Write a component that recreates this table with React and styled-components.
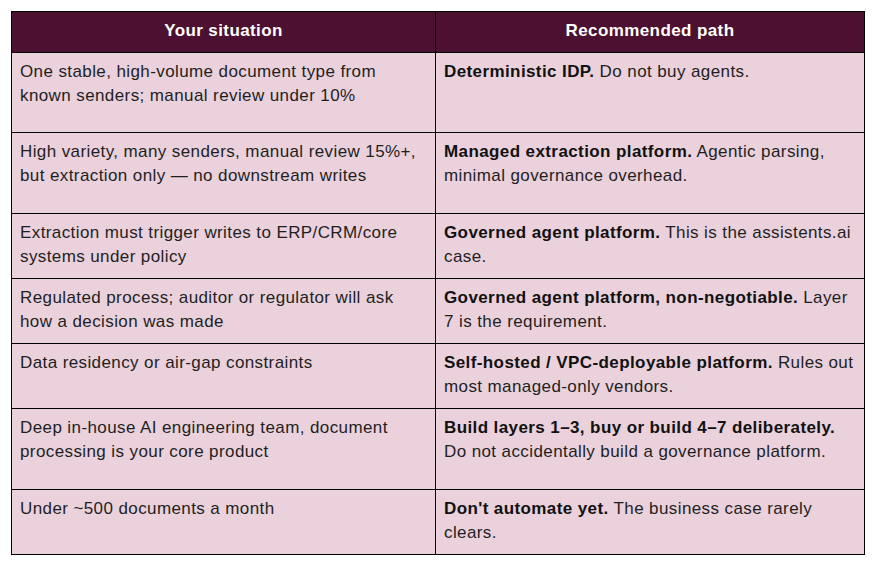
import React from 'react';
import styled, { createGlobalStyle } from 'styled-components';

const GlobalStyle = createGlobalStyle`
  html, body {
    margin: 0;
    padding: 0;
    background: #ffffff;
  }
  body {
    font-family: 'Liberation Sans', Arial, sans-serif;
  }
`;

// each cell is given as its lines, so the wraps follow the original
const rows = [
  {
    situation: ['One stable, high-volume document type from', 'known senders; manual review under 10%'],
    path: [['Deterministic IDP.', ' Do not buy agents.']],
    height: 80,
  },
  {
    situation: ['High variety, many senders, manual review 15%+,', 'but extraction only — no downstream writes'],
    path: [['Managed extraction platform.', ' Agentic parsing,'], ['', 'minimal governance overhead.']],
    height: 81,
  },
  {
    situation: ['Extraction must trigger writes to ERP/CRM/core', 'systems under policy'],
    path: [['Governed agent platform.', ' This is the assistents.ai'], ['', 'case.']],
    height: 65,
  },
  {
    situation: ['Regulated process; auditor or regulator will ask', 'how a decision was made'],
    path: [['Governed agent platform, non-negotiable.', ' Layer'], ['', '7 is the requirement.']],
    height: 65,
  },
  {
    situation: ['Data residency or air-gap constraints'],
    path: [['Self-hosted / VPC-deployable platform.', ' Rules out'], ['', 'most managed-only vendors.']],
    height: 65,
  },
  {
    situation: ['Deep in-house AI engineering team, document', 'processing is your core product'],
    path: [['Build layers 1–3, buy or build 4–7 deliberately.', ''], ['', 'Do not accidentally build a governance platform.']],
    height: 81,
  },
  {
    situation: ['Under ~500 documents a month'],
    path: [["Don't automate yet.", ' The business case rarely'], ['', 'clears.']],
    height: 65,
  },
];

export default function App() {
  return (
    <>
      <GlobalStyle />
      <Page>
        <Table>
          <colgroup>
            <col style={{ width: '424px' }} />
            <col style={{ width: '429px' }} />
          </colgroup>
          <thead>
            <HeadRow>
              <HeadCell>Your situation</HeadCell>
              <HeadCell>Recommended path</HeadCell>
            </HeadRow>
          </thead>
          <tbody>
            {rows.map((row, i) => (
              <BodyRow key={i} $height={row.height}>
                <Cell>
                  {row.situation.map((line, j) => (
                    <Line key={j}>{line}</Line>
                  ))}
                </Cell>
                <Cell>
                  {row.path.map(([strong, rest], j) => (
                    <Line key={j}>
                      {strong && <Strong>{strong}</Strong>}
                      {rest}
                    </Line>
                  ))}
                </Cell>
              </BodyRow>
            ))}
          </tbody>
        </Table>
      </Page>
    </>
  );
}

const Page = styled.div`
  padding: 11px 0 0 11px;
`;

const Table = styled.table`
  border-collapse: collapse;
  table-layout: fixed;
  width: 854px;
  font-size: 17px;
  letter-spacing: 0.4px;
  line-height: 24px;
  color: #1f1f1f;
`;

const HeadRow = styled.tr`
  height: 41px;
  background: #4c1130;
`;

const HeadCell = styled.th`
  border: 1px solid #000;
  padding: 4px 8px 7px;
  color: #ffffff;
  font-weight: bold;
  text-align: center;
  vertical-align: middle;
`;

const BodyRow = styled.tr`
  height: ${p => p.$height}px;
  background: #ead1dc;
`;

const Cell = styled.td`
  border: 1px solid #000;
  padding: 7px 8px 5px;
  vertical-align: top;
  text-align: left;
`;

const Line = styled.div`
  white-space: nowrap;
`;

const Strong = styled.strong`
  font-weight: bold;
  color: #111;
`;
